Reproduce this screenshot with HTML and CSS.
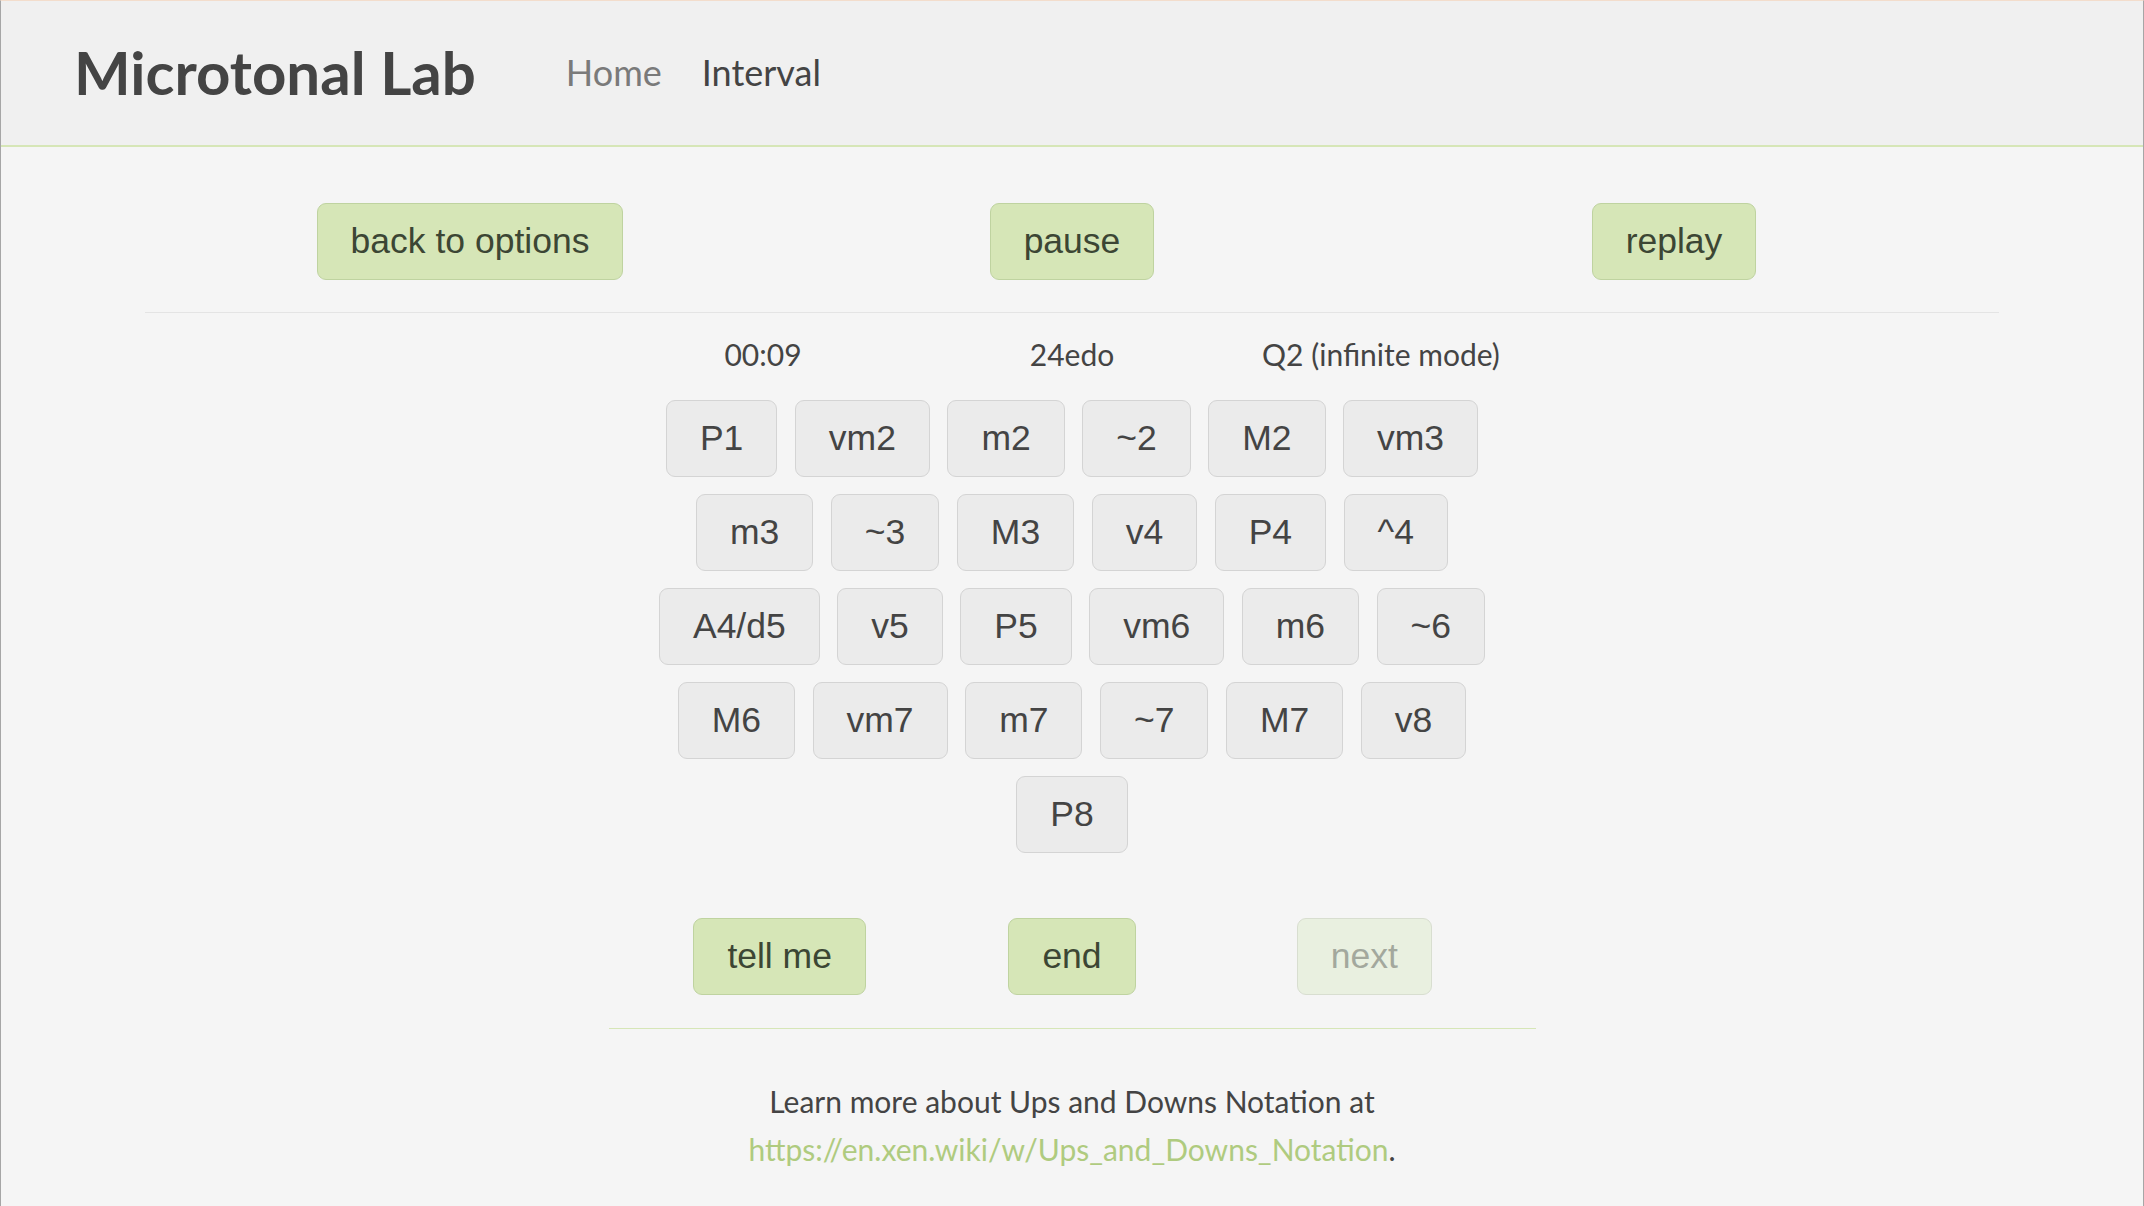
FILE: index.html
```html
<!DOCTYPE html>
<html lang="en">
<head>
<meta charset="utf-8">
<title>Microtonal Lab</title>
<link rel="stylesheet" href="styles.css">
</head>
<body>
<div class="frame">
  <header class="header">
    <h1 class="brand">Microtonal Lab</h1>
    <nav class="nav">
      <a class="nav-link" href="#">Home</a>
      <a class="nav-link active" href="#">Interval</a>
    </nav>
  </header>
  <main class="main">
    <div class="controls">
      <div class="cell"><button class="btn green">back to options</button></div>
      <div class="cell"><button class="btn green">pause</button></div>
      <div class="cell"><button class="btn green">replay</button></div>
    </div>
    <div class="game">
      <div class="info">
        <span>00:09</span>
        <span>24edo</span>
        <span>Q2 (infinite mode)</span>
      </div>
      <div class="intervals">
        <div class="row">
          <button class="btn grey">P1</button>
          <button class="btn grey">vm2</button>
          <button class="btn grey">m2</button>
          <button class="btn grey">~2</button>
          <button class="btn grey">M2</button>
          <button class="btn grey">vm3</button>
        </div>
        <div class="row">
          <button class="btn grey">m3</button>
          <button class="btn grey">~3</button>
          <button class="btn grey">M3</button>
          <button class="btn grey">v4</button>
          <button class="btn grey">P4</button>
          <button class="btn grey">^4</button>
        </div>
        <div class="row">
          <button class="btn grey">A4/d5</button>
          <button class="btn grey">v5</button>
          <button class="btn grey">P5</button>
          <button class="btn grey">vm6</button>
          <button class="btn grey">m6</button>
          <button class="btn grey">~6</button>
        </div>
        <div class="row">
          <button class="btn grey">M6</button>
          <button class="btn grey">vm7</button>
          <button class="btn grey">m7</button>
          <button class="btn grey">~7</button>
          <button class="btn grey">M7</button>
          <button class="btn grey">v8</button>
        </div>
        <div class="row">
          <button class="btn grey">P8</button>
        </div>
      </div>
      <div class="actions">
        <div class="cell"><button class="btn green">tell me</button></div>
        <div class="cell"><button class="btn green">end</button></div>
        <div class="cell"><button class="btn disabled" disabled>next</button></div>
      </div>
      <p class="note">Learn more about Ups and Downs Notation at<br><a class="link" href="#">https://en.xen.wiki/w/Ups_and_Downs_Notation</a>.</p>
    </div>
  </main>
</div>
</body>
</html>
```

FILE: styles.css
```css
* { box-sizing: border-box; }

html, body {
  margin: 0;
  padding: 0;
  background: #f5f5f5;
}

body {
  font-family: Lato, "Liberation Sans", sans-serif;
  color: #444;
}

.frame {
  min-height: 1206px;
  border-top: 1px solid #f3ddcc;
  border-left: 1px solid #a6a6a6;
  border-right: 1px solid #a6a6a6;
}

.header {
  height: 146px;
  background: #f0f0f0;
  border-bottom: 2px solid #d6e6b7;
  display: flex;
  align-items: center;
  padding-left: 73px;
  padding-bottom: 3px;
}

.brand {
  margin: 0;
  font-family: Lato, sans-serif;
  font-weight: 700;
  font-size: 60px;
  color: #444;
  line-height: 1;
}

.nav {
  display: flex;
  gap: 40px;
  margin-left: 90px;
}

.nav-link {
  font-family: Lato, sans-serif;
  font-size: 36px;
  color: #7a7a7a;
  text-decoration: none;
}

.nav-link.active {
  color: #444;
}

.main {
  display: flex;
  flex-direction: column;
  align-items: center;
}

.controls {
  width: 1854px;
  margin-top: 56px;
  padding: 0 24px 32px;
  border-bottom: 1px solid #e4e4e4;
  display: grid;
  grid-template-columns: repeat(3, 1fr);
}

.cell {
  display: flex;
  justify-content: center;
}

.btn {
  font-family: "Liberation Sans", Arial, sans-serif;
  font-size: 35.5px;
  line-height: normal;
  padding: 17px 33px;
  border-radius: 9px;
  border: 1px solid;
  cursor: pointer;
}

.btn.green {
  background: #d6e6b7;
  border-color: #bfd3a0;
  color: #3c4634;
}

.btn.grey {
  background: #ebebeb;
  border-color: #d4d4d4;
  color: #444;
}

.btn.disabled {
  background: #e9f0e0;
  border-color: #d8ded0;
  color: #a3a89d;
  cursor: default;
}

.game {
  width: 927px;
  display: flex;
  flex-direction: column;
  align-items: stretch;
}

.info {
  display: grid;
  grid-template-columns: repeat(3, 1fr);
  justify-items: center;
  font-size: 30px;
  line-height: 34px;
  padding-top: 24px;
  color: #444;
}

.intervals {
  margin-top: 29px;
  display: flex;
  flex-direction: column;
  gap: 17px;
}

.row {
  display: flex;
  justify-content: center;
  gap: 17.5px;
}

.actions {
  margin-top: 65px;
  padding: 0 25px 33px;
  border-bottom: 1px solid #d6e6b7;
  display: grid;
  grid-template-columns: repeat(3, 1fr);
}

.note {
  margin: 48px 0 0;
  text-align: center;
  font-size: 30px;
  line-height: 48px;
  color: #444;
}

.link {
  color: #afcb7f;
  text-decoration: none;
}
```
